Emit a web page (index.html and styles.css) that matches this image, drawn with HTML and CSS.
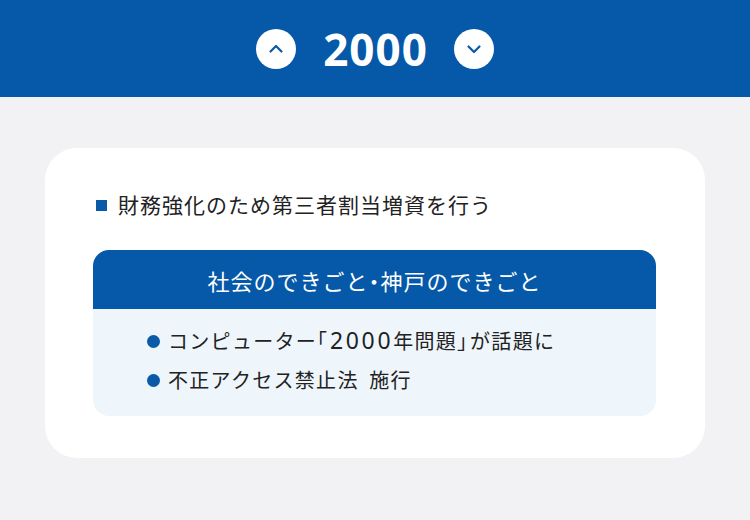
FILE: index.html
```html
<!DOCTYPE html>
<html lang="ja">
<head>
<meta charset="utf-8">
<link rel="stylesheet" href="styles.css">
</head>
<body>
<header class="year-bar">
  <button class="year-nav" aria-label="前の年">
    <svg viewBox="0 0 40 40" width="40" height="40"><circle cx="20" cy="20" r="20" fill="#fff"/><path d="M14.5 22.5 L20 17 L25.5 22.5" fill="none" stroke="#0a5aa8" stroke-width="2.2" stroke-linecap="round" stroke-linejoin="round"/></svg>
  </button>
  <h1 class="year">2000</h1>
  <button class="year-nav" aria-label="次の年">
    <svg viewBox="0 0 40 40" width="40" height="40"><circle cx="20" cy="20" r="20" fill="#fff"/><path d="M14.5 17.5 L20 23 L25.5 17.5" fill="none" stroke="#0a5aa8" stroke-width="2.2" stroke-linecap="round" stroke-linejoin="round"/></svg>
  </button>
</header>
<main class="content">
  <section class="card">
    <p class="headline"><span class="square"></span>財務強化のため第三者割当増資を行う</p>
    <div class="events">
      <h2 class="events-title">社会のできごと<span class="tight">・</span>神戸のできごと</h2>
      <ul class="events-list">
        <li>コンピューター<span class="tight">「</span><span class="num">2000</span>年問題<span class="tight">」</span>が話題に</li>
        <li>不正アクセス禁止法 施行</li>
      </ul>
    </div>
  </section>
</main>
</body>
</html>
```
FILE: styles.css
```css
* { box-sizing: border-box; }
html, body { margin: 0; padding: 0; }
body {
  background: #f2f2f4;
  font-family: "Noto Sans", "Noto Sans CJK JP", sans-serif;
  color: #222;
  width: 750px;
  height: 520px;
  overflow: hidden;
}
.year-bar {
  background: #0559a8;
  height: 97px;
  display: flex;
  align-items: center;
  justify-content: center;
  gap: 27px;
}
.year-nav {
  border: 0;
  padding: 0;
  background: none;
  width: 40px;
  height: 40px;
  display: block;
}
.year-nav svg { display: block; }
.year {
  margin: 0;
  color: #fff;
  font-size: 44px;
  font-weight: 700;
  line-height: 1;
  letter-spacing: 1px;
  margin-right: -1px;
}
.content {
  padding: 51px 45px 0;
}
.card {
  background: #fff;
  border-radius: 32px;
  padding: 42px 49px 42px 48px;
}
.headline {
  margin: 0 0 30px;
  display: flex;
  align-items: center;
  font-size: 21px;
  line-height: 30px;
  letter-spacing: 1px;
  padding-left: 3px;
}
.square {
  width: 11px;
  height: 11px;
  background: #0a5aa8;
  margin-right: 11px;
  flex: none;
}
.events {
  border-radius: 16px;
  overflow: hidden;
  background: #eef6fb;
}
.events-title {
  margin: 0;
  background: #0559a8;
  color: #fff;
  font-weight: 400;
  font-size: 22px;
  letter-spacing: 1px;
  height: 59px;
  display: flex;
  align-items: center;
  justify-content: center;
}
.tight {
  font-feature-settings: "halt";
}
.events-list .tight {
  letter-spacing: 3px;
}
.num {
  font-size: 23px;
  line-height: 1;
  letter-spacing: 2.6px;
}
.events-list {
  list-style: none;
  margin: 0;
  padding: 13px 0 16px 54px;
}
.events-list li {
  position: relative;
  font-size: 20px;
  line-height: 39px;
  padding-left: 21px;
  letter-spacing: 1.3px;
  word-spacing: 4px;
}
.events-list li::before {
  content: "";
  position: absolute;
  left: 0;
  top: 13px;
  width: 13px;
  height: 13px;
  border-radius: 50%;
  background: #0a5aa8;
}
```
